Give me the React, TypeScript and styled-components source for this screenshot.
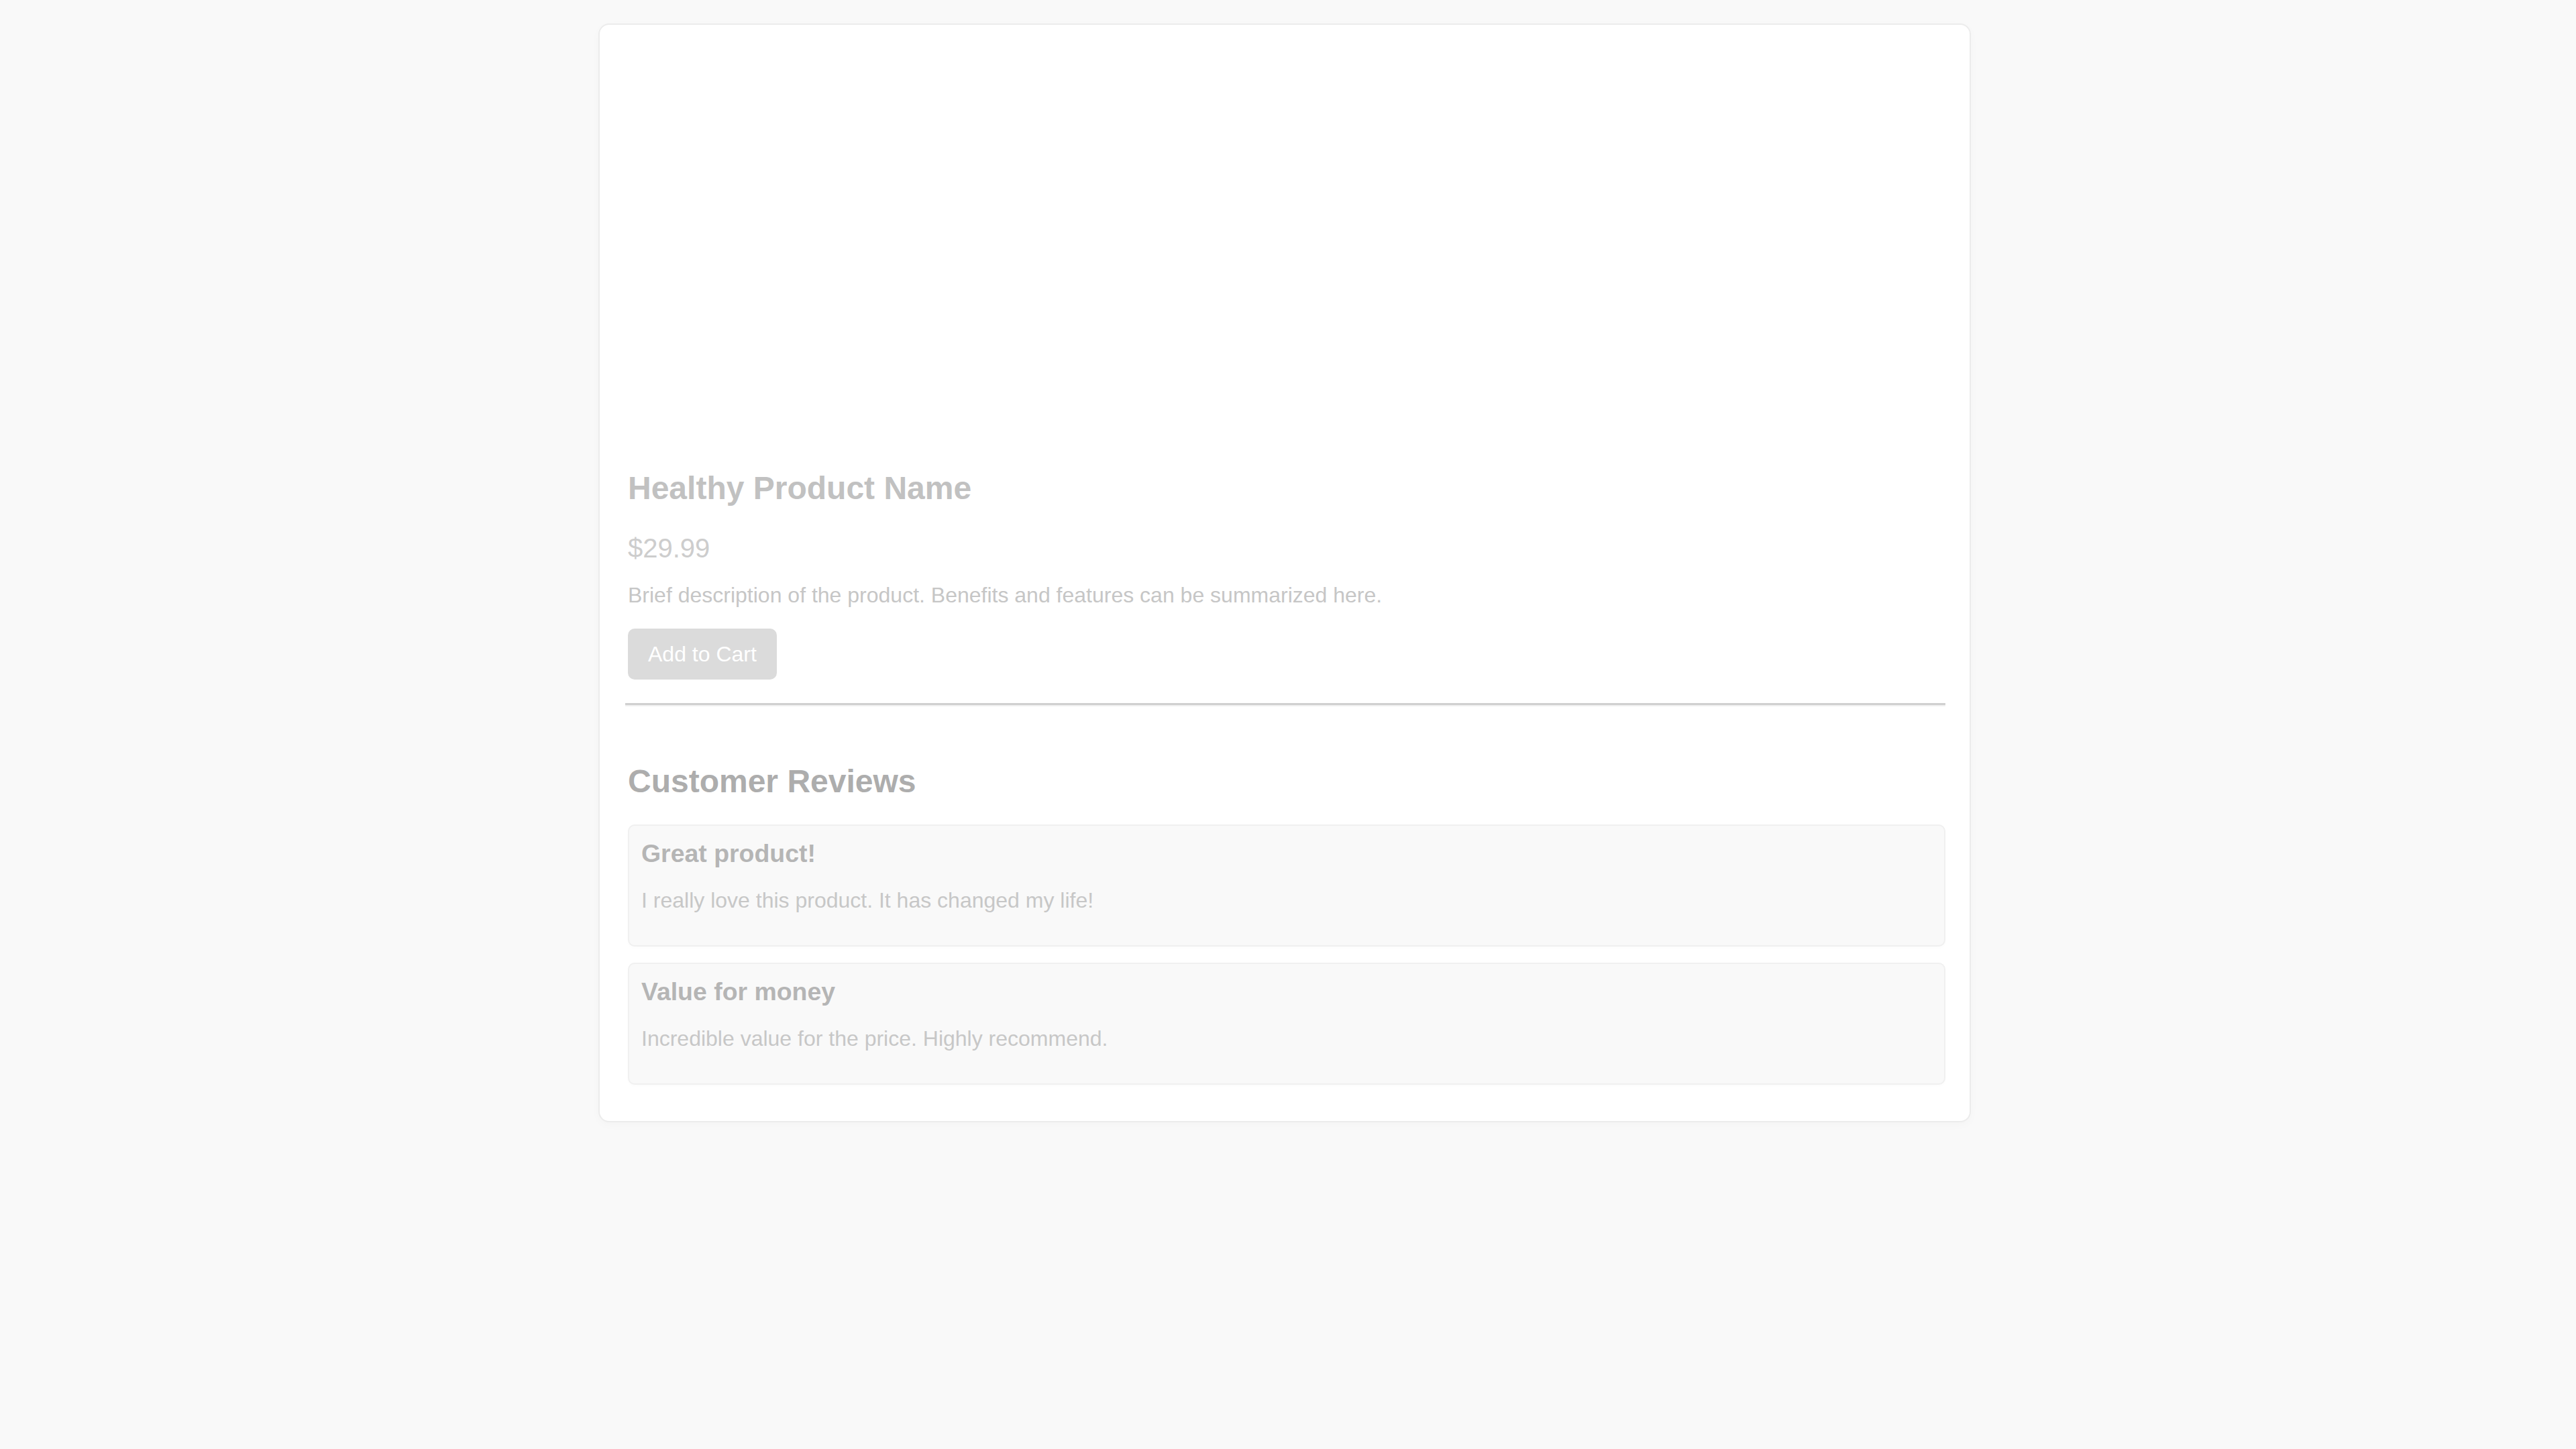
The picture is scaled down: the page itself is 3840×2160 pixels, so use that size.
import React from "react";
import styled, { createGlobalStyle } from "styled-components";

const GlobalStyle = createGlobalStyle`
  html, body {
    margin: 0;
    padding: 0;
    background: #f9f9f9;
    font-family: "Liberation Sans", Arial, Helvetica, sans-serif;
  }
  * { box-sizing: border-box; }
`;

const Page = styled.div`
  min-height: 2160px;
  padding: 35px 10px 40px 0;
  background: #f9f9f9;
`;

const Card = styled.main`
  width: 2046px;
  margin: 0 auto;
  background: #ffffff;
  border: 2px solid #ececec;
  border-radius: 16px;
  box-shadow: 0 4px 14px rgba(0, 0, 0, 0.025);
  padding: 40px 36px 54px 42px;
  display: flex;
  flex-direction: column;
`;

const ImageArea = styled.div`
  height: 600px;
  margin-bottom: 23px;
  background: #ffffff;
`;

const Title = styled.h2`
  margin: 0 0 39px;
  font-size: 48px;
  line-height: 55px;
  font-weight: 700;
  color: #c1c1c1;
`;

const Price = styled.p`
  margin: 0 0 29px;
  font-size: 40px;
  line-height: 46px;
  color: #cdcdcd;
`;

const Description = styled.p`
  margin: 0 0 31px;
  font-size: 32px;
  line-height: 37px;
  color: #c6c6c6;
`;

const CartButton = styled.button`
  align-self: flex-start;
  height: 76px;
  padding: 0 30px;
  margin: 0 0 35px;
  border: none;
  border-radius: 10px;
  background: #dbdbdb;
  color: #ffffff;
  font-family: inherit;
  font-size: 32px;
  line-height: 76px;
`;

const Divider = styled.hr`
  margin: 0 0 84px -4px;
  height: 0;
  border: none;
  border-top: 3px solid #d0d0d0;
  border-bottom: 2px solid #f0f0f0;
`;

const SectionTitle = styled.h2`
  margin: 0 0 37px;
  font-size: 48px;
  line-height: 55px;
  font-weight: 700;
  color: #adadad;
`;

const ReviewList = styled.section`
  display: flex;
  flex-direction: column;
  gap: 24px;
`;

const ReviewCard = styled.article`
  background: #f9f9f9;
  border: 2px solid #f0f0f0;
  border-radius: 10px;
  box-shadow: 0 2px 4px rgba(0, 0, 0, 0.015);
  padding: 20px 20px 20px 18px;
`;

const ReviewTitle = styled.h3`
  margin: 0 0 30px;
  font-size: 37.44px;
  line-height: 43px;
  font-weight: 700;
  color: #b5b5b5;
`;

const ReviewText = styled.p`
  margin: 0 0 28px;
  font-size: 32px;
  line-height: 37px;
  color: #c7c7c7;
`;

const reviews = [
  { title: "Great product!", text: "I really love this product. It has changed my life!" },
  { title: "Value for money", text: "Incredible value for the price. Highly recommend." },
];

export default function App() {
  return (
    <>
      <GlobalStyle />
      <Page>
        <Card>
          <ImageArea />
          <Title>Healthy Product Name</Title>
          <Price>$29.99</Price>
          <Description>
            Brief description of the product. Benefits and features can be summarized here.
          </Description>
          <CartButton>Add to Cart</CartButton>
          <Divider />
          <SectionTitle>Customer Reviews</SectionTitle>
          <ReviewList>
            {reviews.map((r) => (
              <ReviewCard key={r.title}>
                <ReviewTitle>{r.title}</ReviewTitle>
                <ReviewText>{r.text}</ReviewText>
              </ReviewCard>
            ))}
          </ReviewList>
        </Card>
      </Page>
    </>
  );
}
